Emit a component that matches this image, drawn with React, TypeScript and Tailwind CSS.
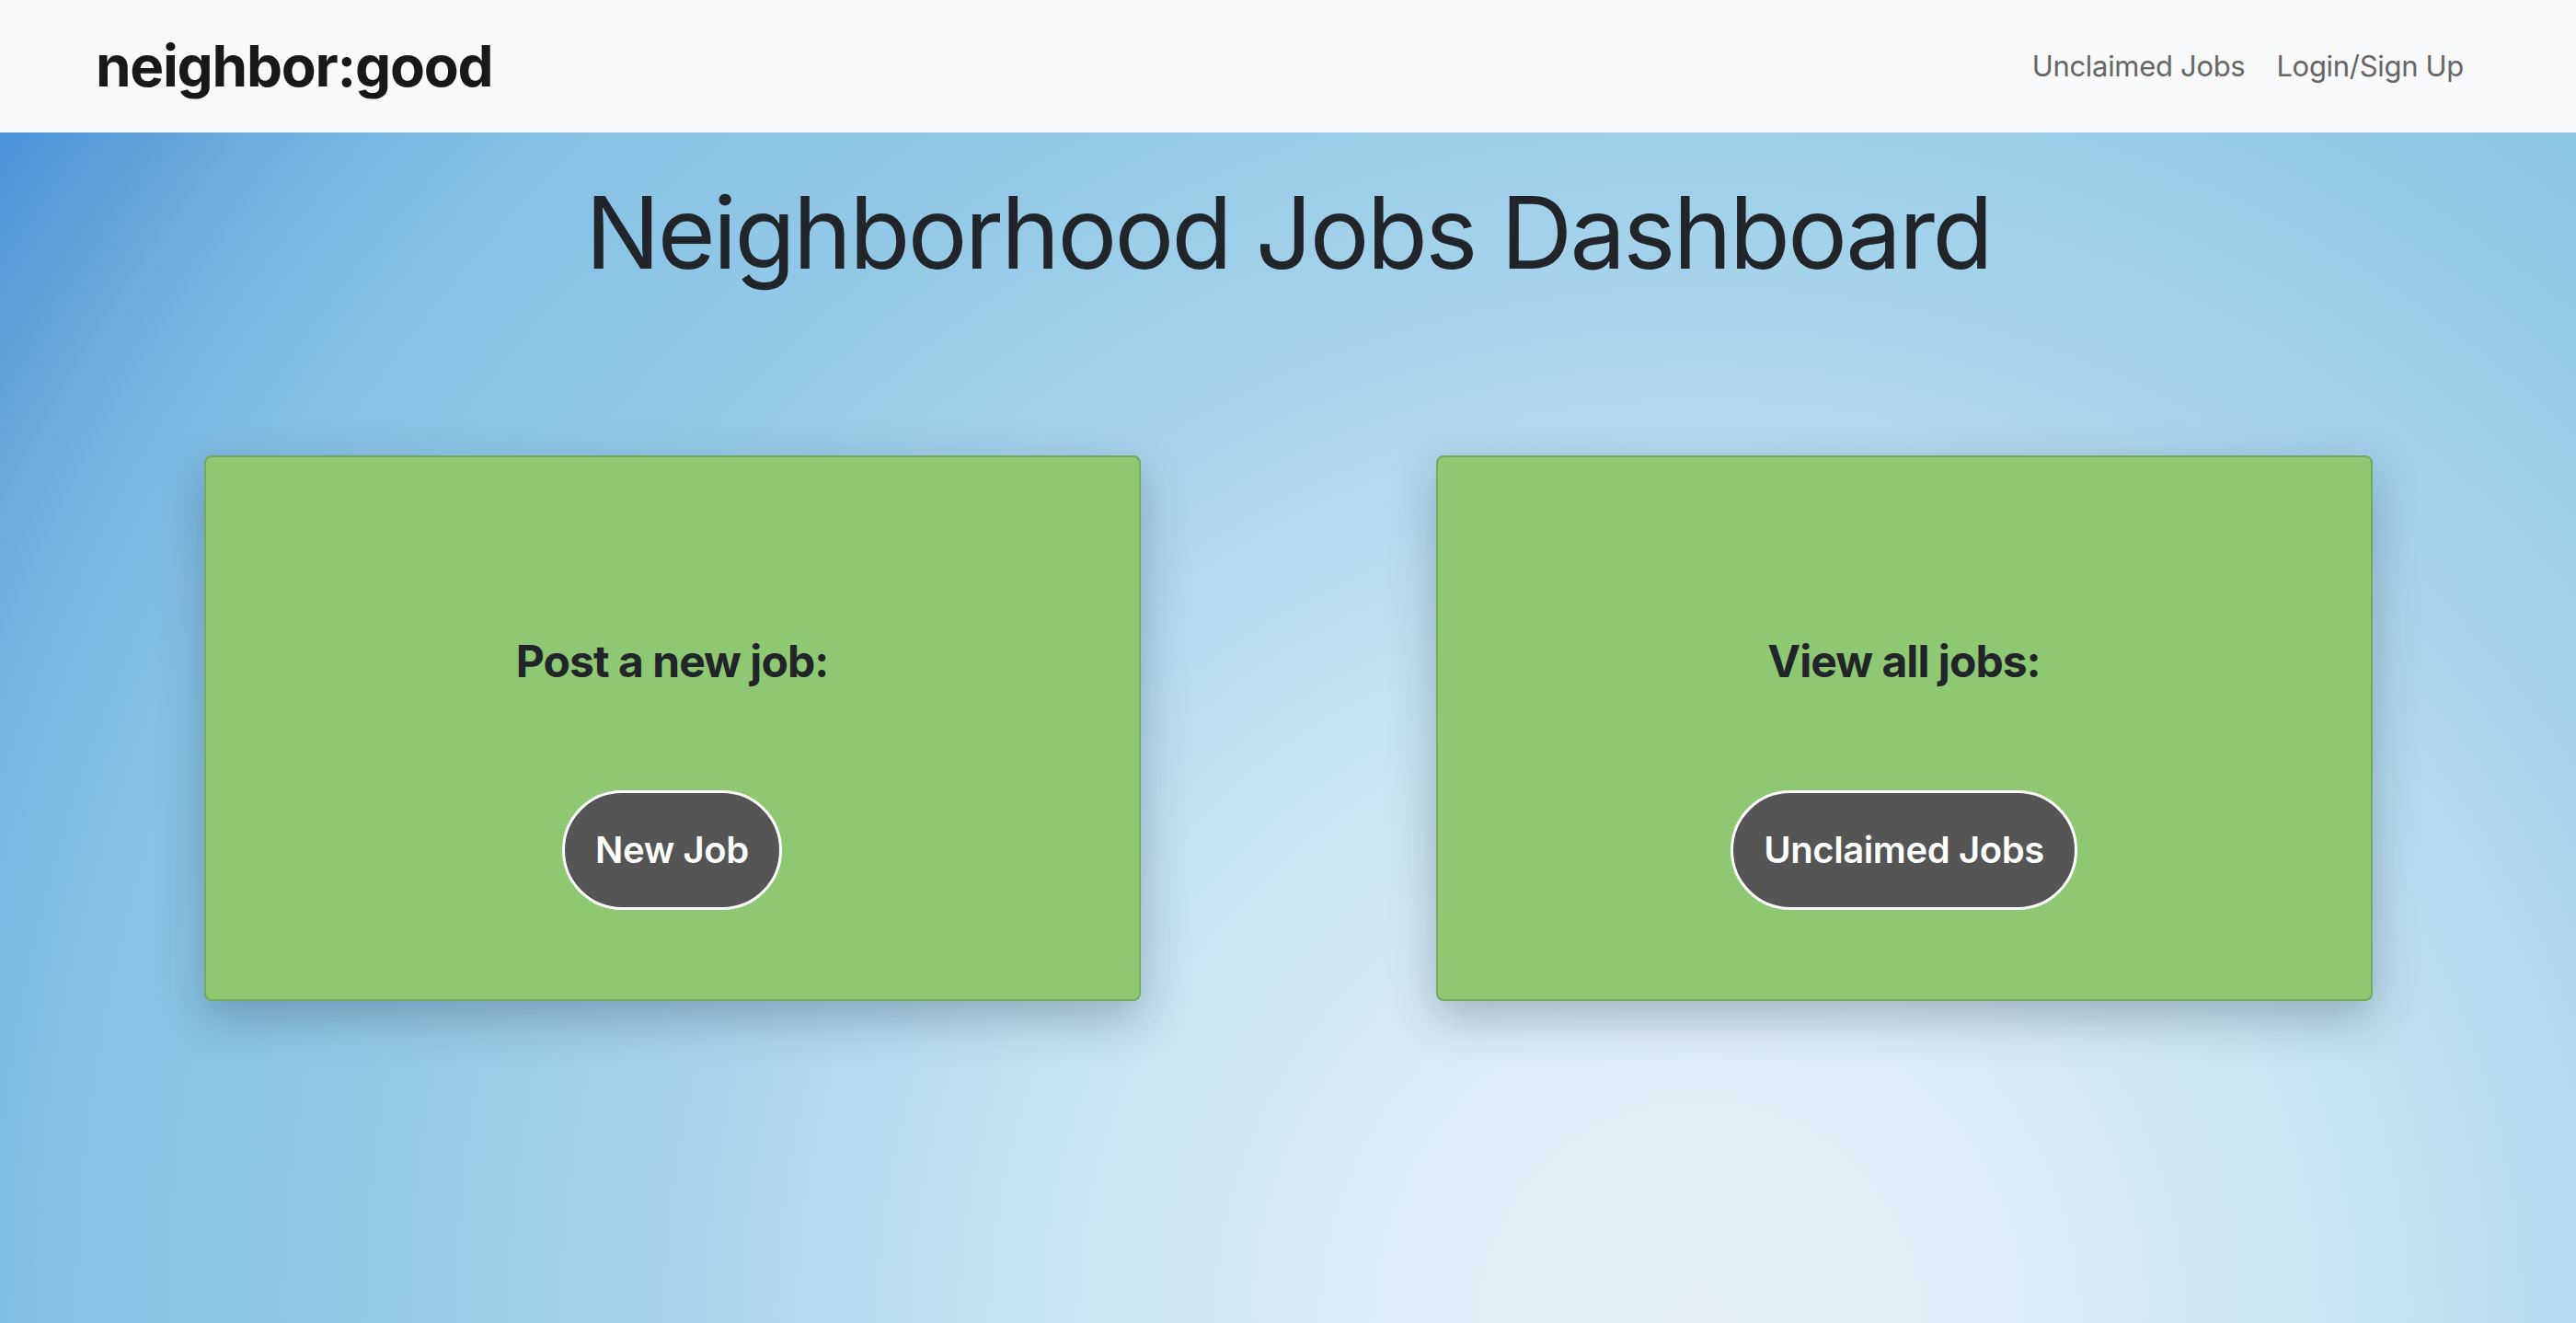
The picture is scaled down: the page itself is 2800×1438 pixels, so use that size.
import React from "react";

const cards = [
  { heading: "Post a new job:", action: "New Job" },
  { heading: "View all jobs:", action: "Unclaimed Jobs" },
];

const Navbar = () => (
  <nav className="h-[144px] bg-[#f8f9fa] flex items-center justify-between pl-[104px] pr-[122px]">
    <a className="text-[62px] font-bold text-[#181818] tracking-[-0.02em] leading-none">
      neighbor:good
    </a>
    <div className="flex items-center gap-[34px] text-[31px] text-[#666666] tracking-[-0.01em]">
      <a>Unclaimed Jobs</a>
      <a>Login/Sign Up</a>
    </div>
  </nav>
);

const ActionCard = ({ heading, action }: { heading: string; action: string }) => (
  <div className="w-[1018px] h-[593px] bg-[#8fc873] border-2 border-[#74aa5c] rounded-[8px] shadow-[0_18px_50px_rgba(30,50,70,0.3)] flex flex-col items-center pt-[193px]">
    <h4 className="text-[48px] leading-[1.2] font-bold text-[#212529] tracking-[-0.02em]">{heading}</h4>
    <button className="mt-[112px] rounded-full border-[3px] border-white bg-[#555555] px-[33px] py-[32px] text-[40px] leading-[1.5] font-semibold text-white tracking-[-0.01em]">
      {action}
    </button>
  </div>
);

export default function App() {
  return (
    <div className="h-[1438px] overflow-hidden font-['Inter','Liberation_Sans',sans-serif] flex flex-col">
      <Navbar />
      <main className="flex-1 bg-[radial-gradient(circle_at_66%_100%,#e4f1f9_0%,#dcedf7_15%,#c4e2f1_34%,#a6d3eb_50%,#93c9e7_65%,#86c0e4_80%,#74b2df_88%,#4a93d7_100%)]">
        <h1 className="mt-[44px] text-center text-[108px] leading-[1.2] font-normal text-[#212529] tracking-[-0.025em]">
          Neighborhood Jobs Dashboard
        </h1>
        <div className="mt-[177px] flex justify-center gap-[321px]">
          {cards.map((c) => (
            <ActionCard key={c.heading} {...c} />
          ))}
        </div>
      </main>
    </div>
  );
}
